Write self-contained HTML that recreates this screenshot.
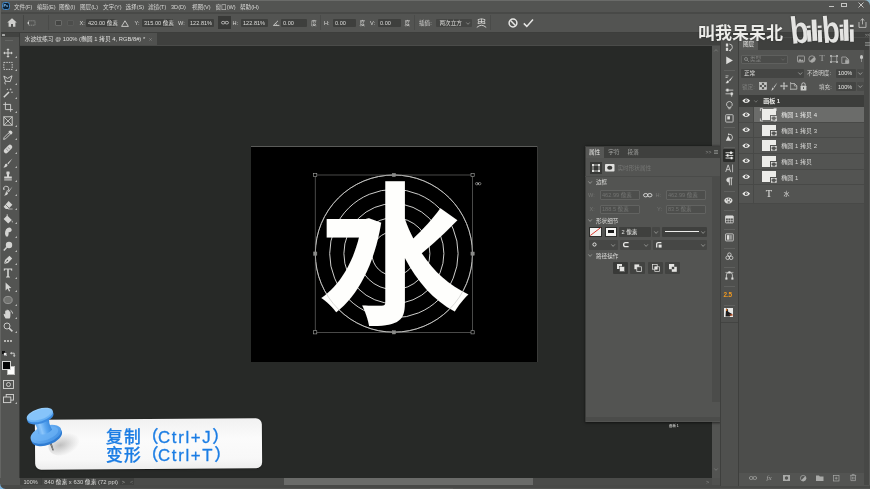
<!DOCTYPE html>
<html lang="zh-CN">
<head>
<meta charset="utf-8">
<title>水波纹练习</title>
<style>
*{box-sizing:border-box;margin:0;padding:0}
html,body{width:870px;height:489px;overflow:hidden;background:#272927}
body{position:relative;will-change:transform;font-family:"Liberation Sans","Noto Sans CJK SC",sans-serif;font-size:5.6px;color:#d6d6d4;line-height:1}
div,span,svg{position:absolute}
.t{white-space:nowrap;line-height:8px;height:8px;font-size:5.6px}
.dim{color:#7d7e7c}
svg{overflow:visible}
</style>
</head>
<body>
<div style="left:0px;top:0px;width:870px;height:1px;background:#6a6b69;"></div>
<div style="left:0px;top:1px;width:870px;height:11px;background:#535452;"></div>
<div style="left:0px;top:12px;width:870px;height:2px;background:#484947;"></div>
<div style="left:0px;top:14px;width:870px;height:18px;background:#535452;"></div>
<div style="left:0px;top:31.5px;width:870px;height:1.5px;background:#3d3e3c;"></div>
<div style="left:0px;top:33px;width:722px;height:12px;background:#3f403e;"></div>
<div style="left:19px;top:44.5px;width:703px;height:1px;background:#4a4b49;"></div>
<div style="left:2px;top:2px;width:8px;height:8.4px;background:#0b2238;border-radius:2.6px;border:0.7px solid #3f86c6"></div>
<span class="t" style="left:3.5px;top:2.4px;font-size:3.8px;color:#8cc4f4;font-weight:bold">Ps</span>
<span class="t" style="left:14px;top:3px;">文件(F)</span>
<span class="t" style="left:37px;top:3px;">编辑(E)</span>
<span class="t" style="left:59px;top:3px;">图像(I)</span>
<span class="t" style="left:80px;top:3px;">图层(L)</span>
<span class="t" style="left:103px;top:3px;">文字(Y)</span>
<span class="t" style="left:125.5px;top:3px;">选择(S)</span>
<span class="t" style="left:148px;top:3px;">滤镜(T)</span>
<span class="t" style="left:171px;top:3px;">3D(D)</span>
<span class="t" style="left:192px;top:3px;">视图(V)</span>
<span class="t" style="left:215.5px;top:3px;">窗口(W)</span>
<span class="t" style="left:240px;top:3px;">帮助(H)</span>
<div style="left:829px;top:6.3px;width:5px;height:1.2px;background:#c4c4c2;"></div>
<div style="left:841px;top:2.6px;width:6px;height:4.8px;background:transparent;border:1px solid #c4c4c2"></div>
<svg style="left:857.6px;top:2.2px" width="6" height="6" viewBox="0 0 6 6"><path d="M0.5 0.5L5.5 5.5M5.5 0.5L0.5 5.5" stroke="#c4c4c2" stroke-width="1"/></svg>
<svg style="left:7px;top:18px" width="10" height="9" viewBox="0 0 10 9"><path d="M5 0.3L0.2 4.6H1.6V8.8H4V6H6V8.8H8.4V4.6H9.8Z" fill="#cfcfcd"/></svg>
<div style="left:22.5px;top:15px;width:0.6px;height:15px;background:#454644;"></div>
<svg style="left:27px;top:19.5px" width="9" height="6" viewBox="0 0 9 6"><rect x="1.5" y="0.8" width="6.5" height="4.4" fill="none" stroke="#a9aaa8" stroke-width="0.7" stroke-dasharray="1.2 0.8"/><path d="M0 3L2 1.6V4.4Z" fill="#cfcfcd"/></svg>
<div style="left:48px;top:15px;width:0.6px;height:15px;background:#4a4b49;"></div>
<div style="left:54.6px;top:19.6px;width:7px;height:6.8px;background:#444543;border:0.6px solid #6a6b69;border-radius:1px"></div>
<div style="left:67.4px;top:19.6px;width:6.8px;height:6.8px;background:#4c4d4b;border:0.6px solid #5a5b59;border-radius:1px"></div>
<span class="t" style="left:79.6px;top:19px;">X:</span>
<div style="left:86px;top:19px;width:30px;height:8px;background:#3e3f3d;border-radius:1px"></div>
<span class="t" style="left:88px;top:19px;color:#dcdcda">420.00 像素</span>
<svg style="left:121px;top:19.5px" width="8" height="7" viewBox="0 0 8 7"><path d="M4 0.8L7.4 6.4H0.6Z" fill="none" stroke="#d0d0ce" stroke-width="0.9"/></svg>
<span class="t" style="left:134.5px;top:19px;">Y:</span>
<div style="left:142px;top:19px;width:31px;height:8px;background:#3e3f3d;border-radius:1px"></div>
<span class="t" style="left:144px;top:19px;color:#dcdcda">315.00 像素</span>
<span class="t" style="left:178px;top:19px;">W:</span>
<div style="left:188px;top:19px;width:26px;height:8px;background:#3e3f3d;border-radius:1px"></div>
<span class="t" style="left:190px;top:19px;color:#dcdcda">122.81%</span>
<div style="left:218px;top:15.5px;width:12.5px;height:13.5px;background:#383937;"></div>
<svg style="left:220.5px;top:21px" width="8" height="3.4" viewBox="0 0 8 3.4"><ellipse cx="2.2" cy="1.7" rx="1.8" ry="1.3" fill="none" stroke="#d8d8d6" stroke-width="0.7"/><ellipse cx="5.8" cy="1.7" rx="1.8" ry="1.3" fill="none" stroke="#d8d8d6" stroke-width="0.7"/></svg>
<span class="t" style="left:232.5px;top:19px;">H:</span>
<div style="left:241px;top:19px;width:27px;height:8px;background:#3e3f3d;border-radius:1px"></div>
<span class="t" style="left:243px;top:19px;color:#dcdcda">122.81%</span>
<svg style="left:273px;top:20px" width="7" height="6" viewBox="0 0 7 6"><path d="M0.4 5.4H6.4M0.4 5.4L5 0.8" fill="none" stroke="#d0d0ce" stroke-width="0.9"/><path d="M3.4 5.4A3 3 0 0 0 2.6 3.2" fill="none" stroke="#d0d0ce" stroke-width="0.7"/></svg>
<div style="left:281px;top:19px;width:26px;height:8px;background:#3e3f3d;border-radius:1px"></div>
<span class="t" style="left:283px;top:19px;color:#dcdcda">0.00</span>
<span class="t" style="left:311px;top:19px;">度</span>
<div style="left:320px;top:15px;width:0.6px;height:15px;background:#4a4b49;"></div>
<span class="t" style="left:324px;top:19px;">H:</span>
<div style="left:333px;top:19px;width:23px;height:8px;background:#3e3f3d;border-radius:1px"></div>
<span class="t" style="left:335px;top:19px;color:#dcdcda">0.00</span>
<span class="t" style="left:359.5px;top:19px;">度</span>
<span class="t" style="left:370px;top:19px;">V:</span>
<div style="left:378px;top:19px;width:23px;height:8px;background:#3e3f3d;border-radius:1px"></div>
<span class="t" style="left:380px;top:19px;color:#dcdcda">0.00</span>
<span class="t" style="left:404.5px;top:19px;">度</span>
<div style="left:414px;top:15px;width:0.6px;height:15px;background:#4a4b49;"></div>
<span class="t" style="left:419px;top:19px;">插值:</span>
<div style="left:436px;top:18.5px;width:35.5px;height:8.5px;background:#444543;border-radius:1px"></div>
<span class="t" style="left:439.5px;top:19px;">两次立方</span>
<svg style="left:466px;top:21.5px" width="4" height="3" viewBox="0 0 4 3"><path d="M0.3 0.5L2 2.3L3.7 0.5" fill="none" stroke="#b0b0ae" stroke-width="0.6"/></svg>
<svg style="left:476px;top:18px" width="11" height="10" viewBox="0 0 11 10"><path d="M2 1.6Q5.5 0 9 1.6M2 1.6Q3 3.6 2 5.6M9 1.6Q8 3.6 9 5.6M2 5.6Q5.5 4.4 9 5.6M5.5 0.8V5M2.4 3.6H8.6" fill="none" stroke="#d8d8d6" stroke-width="0.8"/><path d="M0.8 9.4Q5.5 5.2 10.2 9.4" fill="none" stroke="#d8d8d6" stroke-width="0.9"/></svg>
<div style="left:490px;top:15px;width:0.6px;height:15px;background:#4a4b49;"></div>
<svg style="left:508px;top:18px" width="10" height="10" viewBox="0 0 10 10"><circle cx="5" cy="5" r="3.9" fill="none" stroke="#e6e6e4" stroke-width="1.5"/><path d="M2.3 2.3L7.7 7.7" stroke="#e6e6e4" stroke-width="1.5"/></svg>
<svg style="left:523px;top:18px" width="11" height="10" viewBox="0 0 11 10"><path d="M0.8 5.4L3.8 8.4L10 1.4" fill="none" stroke="#e6e6e4" stroke-width="1.5"/></svg>
<svg style="left:858.3px;top:17.6px" width="9.4" height="10" viewBox="0 0 9.4 10"><path d="M1 4V9.4H8V4M4.5 6.4V0.8M2.6 2.6L4.5 0.8L6.4 2.6" fill="none" stroke="#c9c9c7" stroke-width="0.8"/></svg>
<div style="left:0px;top:32.8px;width:19.4px;height:4.5px;background:#424341;"></div>
<div style="left:1.6px;top:34.2px;width:3px;height:1.4px;background:#a9aaa8;border-radius:0.5px"></div>
<div style="left:20.2px;top:33px;width:136.5px;height:12px;background:#50514f;"></div>
<span class="t" style="left:24.6px;top:35.2px;color:#dededc;font-size:5.8px">水波纹练习 @ 100% (椭圆 1 拷贝 4, RGB/8#) *</span>
<svg style="left:148.5px;top:37.6px" width="3" height="3" viewBox="0 0 3 3"><path d="M0.3 0.3L2.7 2.7M2.7 0.3L0.3 2.7" stroke="#9a9b99" stroke-width="0.5"/></svg>
<div style="left:0px;top:37.2px;width:19.2px;height:441px;background:#535452;"></div>
<div style="left:5px;top:39.8px;width:8px;height:0.7px;background:#646563;"></div>
<div style="left:19.2px;top:32.8px;width:1px;height:445.5px;background:#3a3b39;"></div>
<div style="left:0px;top:0px;width:0.8px;height:489px;background:#646563;"></div>
<svg style="left:3.3px;top:47.5px" width="10" height="10" viewBox="0 0 10 10"><path d="M5 0.2L6.6 2H5.5V4.5H8V3.4L9.8 5L8 6.6V5.5H5.5V8H6.6L5 9.8L3.4 8H4.5V5.5H2V6.6L0.2 5L2 3.4V4.5H4.5V2H3.4Z" fill="#d4d4d2"/></svg>
<svg style="left:14.6px;top:56.1px" width="2" height="2" viewBox="0 0 2 2"><path d="M2 0V2H0Z" fill="#b9b9b7"/></svg>
<svg style="left:3.3px;top:60.8px" width="10" height="10" viewBox="0 0 10 10"><rect x="0.8" y="1.4" width="8.4" height="7" fill="none" stroke="#d4d4d2" stroke-width="0.9" stroke-dasharray="1.5 1"/></svg>
<svg style="left:14.6px;top:69.39999999999999px" width="2" height="2" viewBox="0 0 2 2"><path d="M2 0V2H0Z" fill="#b9b9b7"/></svg>
<svg style="left:3.3px;top:74.5px" width="10" height="10" viewBox="0 0 10 10"><path d="M0.8 1L4.6 3.4L9 0.8L7.2 6.6L2.6 6.2Z" fill="none" stroke="#d4d4d2" stroke-width="0.9"/><path d="M2.6 6.2Q1 7.5 2.4 9.4" fill="none" stroke="#d4d4d2" stroke-width="0.9"/></svg>
<svg style="left:14.6px;top:83.1px" width="2" height="2" viewBox="0 0 2 2"><path d="M2 0V2H0Z" fill="#b9b9b7"/></svg>
<svg style="left:3.3px;top:88.3px" width="10" height="10" viewBox="0 0 10 10"><path d="M0.8 9.2L6 4" stroke="#d4d4d2" stroke-width="1.5"/><path d="M7.6 0.4V2.4M6.6 1.4H8.6M9 3.6V5M8.3 4.3H9.7M4.4 0.8V2M3.8 1.4H5" stroke="#d4d4d2" stroke-width="0.6"/></svg>
<svg style="left:14.6px;top:96.89999999999999px" width="2" height="2" viewBox="0 0 2 2"><path d="M2 0V2H0Z" fill="#b9b9b7"/></svg>
<svg style="left:3.3px;top:102px" width="10" height="10" viewBox="0 0 10 10"><path d="M2.4 0.2V7.6H9.8M0.2 2.4H7.6V9.8" fill="none" stroke="#d4d4d2" stroke-width="0.9"/></svg>
<svg style="left:14.6px;top:110.6px" width="2" height="2" viewBox="0 0 2 2"><path d="M2 0V2H0Z" fill="#b9b9b7"/></svg>
<svg style="left:3.3px;top:116px" width="10" height="10" viewBox="0 0 10 10"><rect x="0.8" y="0.8" width="8.4" height="8.4" fill="none" stroke="#d4d4d2" stroke-width="0.9"/><path d="M0.8 0.8L9.2 9.2M9.2 0.8L0.8 9.2" stroke="#d4d4d2" stroke-width="0.8"/></svg>
<svg style="left:14.6px;top:124.6px" width="2" height="2" viewBox="0 0 2 2"><path d="M2 0V2H0Z" fill="#b9b9b7"/></svg>
<svg style="left:3.3px;top:129.8px" width="10" height="10" viewBox="0 0 10 10"><path d="M0.6 9.4L1.2 7.4L5.4 3.2L6.8 4.6L2.6 8.8Z" fill="none" stroke="#d4d4d2" stroke-width="0.9"/><path d="M5.2 2L8 4.8L9.2 3.6Q10 2 8.8 1.2Q7.6 0 6.4 0.8Z" fill="#d4d4d2"/></svg>
<svg style="left:14.6px;top:138.4px" width="2" height="2" viewBox="0 0 2 2"><path d="M2 0V2H0Z" fill="#b9b9b7"/></svg>
<svg style="left:3.3px;top:143.5px" width="10" height="10" viewBox="0 0 10 10"><g transform="rotate(-45 5 5)"><rect x="0" y="2.8" width="10" height="4.4" rx="2" fill="#d4d4d2"/><circle cx="4" cy="4.4" r="0.4" fill="#535452"/><circle cx="6" cy="4.4" r="0.4" fill="#535452"/><circle cx="4" cy="5.7" r="0.4" fill="#535452"/><circle cx="6" cy="5.7" r="0.4" fill="#535452"/></g></svg>
<svg style="left:14.6px;top:152.1px" width="2" height="2" viewBox="0 0 2 2"><path d="M2 0V2H0Z" fill="#b9b9b7"/></svg>
<svg style="left:3.3px;top:157.5px" width="10" height="10" viewBox="0 0 10 10"><path d="M9.4 0.4L4.4 5.2L5.4 6.2Z" fill="#d4d4d2"/><path d="M3.8 5.8Q5.4 7.6 3.4 8.8Q1.6 9.8 0.4 9.2Q1.8 8.4 1.8 7.2Q2 5.6 3.8 5.8Z" fill="#d4d4d2"/></svg>
<svg style="left:14.6px;top:166.1px" width="2" height="2" viewBox="0 0 2 2"><path d="M2 0V2H0Z" fill="#b9b9b7"/></svg>
<svg style="left:3.3px;top:171.2px" width="10" height="10" viewBox="0 0 10 10"><path d="M3.6 0.6H6.4Q7.2 2.4 6 4V5.6H8.8V7.6H1.2V5.6H4V4Q2.8 2.4 3.6 0.6Z" fill="#d4d4d2"/><rect x="1.2" y="8.4" width="7.6" height="1" fill="#d4d4d2"/></svg>
<svg style="left:14.6px;top:179.79999999999998px" width="2" height="2" viewBox="0 0 2 2"><path d="M2 0V2H0Z" fill="#b9b9b7"/></svg>
<svg style="left:3.3px;top:185.5px" width="10" height="10" viewBox="0 0 10 10"><path d="M9.6 0.4L5 5.4L5.8 6.2Z" fill="#d4d4d2"/><path d="M4.4 6Q5.8 7.6 4 8.8Q2.4 9.8 1 9.4Q2.4 8.4 2.4 7.4Q2.6 5.8 4.4 6Z" fill="#d4d4d2"/><path d="M0.6 3.4A2.6 2.6 0 1 1 3.2 5.4" fill="none" stroke="#d4d4d2" stroke-width="0.9"/><path d="M0 2.2L0.7 4L2.2 3Z" fill="#d4d4d2"/></svg>
<svg style="left:14.6px;top:194.1px" width="2" height="2" viewBox="0 0 2 2"><path d="M2 0V2H0Z" fill="#b9b9b7"/></svg>
<svg style="left:3.3px;top:199.5px" width="10" height="10" viewBox="0 0 10 10"><path d="M5.6 1L9.4 4.8L5.2 9H2.8L0.6 6.8Z" fill="#d4d4d2"/><path d="M2.4 4.4L6.2 8.2" stroke="#535452" stroke-width="0.7"/><path d="M5 9H9.6" stroke="#d4d4d2" stroke-width="0.7"/></svg>
<svg style="left:14.6px;top:208.1px" width="2" height="2" viewBox="0 0 2 2"><path d="M2 0V2H0Z" fill="#b9b9b7"/></svg>
<svg style="left:3.3px;top:213.5px" width="10" height="10" viewBox="0 0 10 10"><path d="M4.2 1.4L8.8 6L5.2 9.6L0.6 5Z" fill="#d4d4d2"/><path d="M4.2 0.2V4.6" stroke="#d4d4d2" stroke-width="0.8"/><path d="M9.2 6.6Q10.2 8.2 9.2 8.8Q8.2 8.2 9.2 6.6Z" fill="#d4d4d2"/></svg>
<svg style="left:14.6px;top:222.1px" width="2" height="2" viewBox="0 0 2 2"><path d="M2 0V2H0Z" fill="#b9b9b7"/></svg>
<svg style="left:3.3px;top:227.2px" width="10" height="10" viewBox="0 0 10 10"><path d="M3 9.6Q1.4 7 2.2 4.4Q2.8 2 4.6 1Q6.8 0 8.2 1.4Q9.4 2.8 8.2 4.2Q7 5.4 5.6 5.2Q6 7.4 5 9.6Z" fill="#d4d4d2"/></svg>
<svg style="left:14.6px;top:235.79999999999998px" width="2" height="2" viewBox="0 0 2 2"><path d="M2 0V2H0Z" fill="#b9b9b7"/></svg>
<svg style="left:3.3px;top:241px" width="10" height="10" viewBox="0 0 10 10"><circle cx="6" cy="4" r="3.2" fill="#d4d4d2"/><path d="M3.8 6.2L0.8 9.4" stroke="#d4d4d2" stroke-width="1.5"/></svg>
<svg style="left:14.6px;top:249.6px" width="2" height="2" viewBox="0 0 2 2"><path d="M2 0V2H0Z" fill="#b9b9b7"/></svg>
<svg style="left:3.3px;top:254.5px" width="10" height="10" viewBox="0 0 10 10"><path d="M1 9L2 5L6.4 0.8L9.2 3.6L5 8Z" fill="#d4d4d2"/><circle cx="4.4" cy="5.6" r="0.8" fill="#535452"/><path d="M1 9L4.2 5.8" stroke="#535452" stroke-width="0.5"/></svg>
<svg style="left:14.6px;top:263.1px" width="2" height="2" viewBox="0 0 2 2"><path d="M2 0V2H0Z" fill="#b9b9b7"/></svg>
<svg style="left:3.3px;top:268px" width="10" height="10" viewBox="0 0 10 10"><path d="M0.8 0.6H9.2V2.8H8.4Q8.2 1.6 7.2 1.6H5.8V8Q5.8 8.6 7 8.7V9.4H3V8.7Q4.2 8.6 4.2 8V1.6H2.8Q1.8 1.6 1.6 2.8H0.8Z" fill="#d4d4d2"/></svg>
<svg style="left:14.6px;top:276.6px" width="2" height="2" viewBox="0 0 2 2"><path d="M2 0V2H0Z" fill="#b9b9b7"/></svg>
<svg style="left:3.3px;top:281.8px" width="10" height="10" viewBox="0 0 10 10"><path d="M2.6 0.4V8.4L4.6 6.6L6 9.6L7.2 9L5.8 6.2L8.4 6Z" fill="#d4d4d2"/></svg>
<svg style="left:14.6px;top:290.40000000000003px" width="2" height="2" viewBox="0 0 2 2"><path d="M2 0V2H0Z" fill="#b9b9b7"/></svg>
<svg style="left:3.3px;top:295.3px" width="10" height="10" viewBox="0 0 10 10"><ellipse cx="5" cy="5" rx="4.2" ry="3.6" fill="#71726f" stroke="#a4a5a3" stroke-width="0.8"/></svg>
<svg style="left:14.6px;top:303.90000000000003px" width="2" height="2" viewBox="0 0 2 2"><path d="M2 0V2H0Z" fill="#b9b9b7"/></svg>
<svg style="left:3.3px;top:308.8px" width="10" height="10" viewBox="0 0 10 10"><path d="M2.6 9.6Q0.6 6.6 0.6 5Q1.2 4.2 2.2 5.4V2Q2.8 1.2 3.4 2V1Q4.2 0.2 4.8 1V1.4Q5.6 0.6 6.2 1.6V2.4Q7 1.8 7.4 2.8V6.6Q7.4 8.4 6.6 9.6Z" fill="#d4d4d2"/><path d="M7.6 1.4A3.6 3.6 0 0 1 9.6 4.6" fill="none" stroke="#d4d4d2" stroke-width="0.9"/></svg>
<svg style="left:14.6px;top:317.40000000000003px" width="2" height="2" viewBox="0 0 2 2"><path d="M2 0V2H0Z" fill="#b9b9b7"/></svg>
<svg style="left:3.3px;top:322.3px" width="10" height="10" viewBox="0 0 10 10"><circle cx="4" cy="4" r="3" fill="none" stroke="#d4d4d2" stroke-width="0.9"/><path d="M6.2 6.2L9.4 9.4" stroke="#d4d4d2" stroke-width="1.5"/></svg>
<svg style="left:14.6px;top:330.90000000000003px" width="2" height="2" viewBox="0 0 2 2"><path d="M2 0V2H0Z" fill="#b9b9b7"/></svg>
<div style="left:3.6px;top:340.4px;width:2px;height:2px;background:#d4d4d2;border-radius:1px"></div>
<div style="left:7.0px;top:340.4px;width:2px;height:2px;background:#d4d4d2;border-radius:1px"></div>
<div style="left:10.4px;top:340.4px;width:2px;height:2px;background:#d4d4d2;border-radius:1px"></div>
<svg style="left:2px;top:351px" width="5" height="5" viewBox="0 0 5 5"><rect x="0" y="0" width="3" height="3" fill="#111"/><rect x="1.8" y="1.8" width="3" height="3" fill="#eee" stroke="#111" stroke-width="0.3"/></svg>
<svg style="left:10px;top:350.5px" width="6" height="6" viewBox="0 0 6 6"><path d="M1 2.2H4.2V5" fill="none" stroke="#d4d4d2" stroke-width="0.9"/><path d="M0 2.2L1.6 0.8V3.6Z" fill="#d4d4d2"/><path d="M4.2 6L2.8 4.4H5.6Z" fill="#d4d4d2"/></svg>
<div style="left:6.5px;top:365.5px;width:8.5px;height:9.5px;background:#fdfdfd;border:0.6px solid #bdbdbb"></div>
<div style="left:2px;top:360.5px;width:8.5px;height:9px;background:#050505;border:0.7px solid #d5d5d3"></div>
<svg style="left:3px;top:380px" width="11" height="9" viewBox="0 0 11 9"><rect x="0.5" y="0.5" width="10" height="8" fill="none" stroke="#d4d4d2" stroke-width="0.9"/><circle cx="5.5" cy="4.5" r="2" fill="none" stroke="#d4d4d2" stroke-width="0.9"/></svg>
<svg style="left:3px;top:393.5px" width="11" height="9" viewBox="0 0 11 9"><rect x="3.2" y="0.5" width="7.3" height="5.6" fill="none" stroke="#d4d4d2" stroke-width="0.9"/><rect x="0.5" y="3" width="7.3" height="5.6" fill="#535452" stroke="#d4d4d2" stroke-width="0.9"/></svg>
<svg style="left:14.6px;top:401.6px" width="2" height="2" viewBox="0 0 2 2"><path d="M2 0V2H0Z" fill="#b9b9b7"/></svg>
<div style="left:251px;top:146px;width:286.5px;height:215.5px;background:#000000;"></div>
<div style="left:251px;top:146px;width:286.5px;height:1px;background:#5a5b59;"></div>
<div style="left:536.5px;top:146px;width:1px;height:215.5px;background:#3a3b39;"></div>
<svg style="left:0;top:0" width="870" height="489" viewBox="0 0 870 489"><circle cx="393.9" cy="253.6" r="22" fill="none" stroke="#e4e4e2" stroke-width="0.9"/><circle cx="393.9" cy="253.6" r="36" fill="none" stroke="#e4e4e2" stroke-width="0.9"/><circle cx="393.9" cy="253.6" r="50" fill="none" stroke="#e4e4e2" stroke-width="0.9"/><circle cx="393.9" cy="253.6" r="64.2" fill="none" stroke="#e4e4e2" stroke-width="0.9"/><circle cx="393.9" cy="253.6" r="78.6" fill="none" stroke="#e4e4e2" stroke-width="0.9"/></svg>
<span id="shui" style="left:318px;top:129.3px;font-family:'Noto Sans CJK SC',sans-serif;font-weight:700;font-size:153px;line-height:234px;height:234px;color:#fefefc;white-space:nowrap">水</span>
<svg style="left:0;top:0" width="870" height="489" viewBox="0 0 870 489"><circle cx="393.9" cy="253.6" r="78.6" fill="none" stroke="#b4b5b3" stroke-width="0.5"/><rect x="315.2" y="175" width="157.40000000000003" height="157.3" fill="none" stroke="#7a7b79" stroke-width="0.6"/><rect x="313.59999999999997" y="173.4" width="3.2" height="3.2" fill="#000" stroke="#a6a7a5" stroke-width="0.6"/><rect x="313.5" y="251.95000000000002" width="3.4" height="3.4" fill="#8a8b89" stroke="#8a8b89" stroke-width="0.4"/><rect x="313.59999999999997" y="330.7" width="3.2" height="3.2" fill="#000" stroke="#a6a7a5" stroke-width="0.6"/><rect x="392.2" y="173.3" width="3.4" height="3.4" fill="#8a8b89" stroke="#8a8b89" stroke-width="0.4"/><rect x="392.2" y="330.6" width="3.4" height="3.4" fill="#8a8b89" stroke="#8a8b89" stroke-width="0.4"/><rect x="471.0" y="173.4" width="3.2" height="3.2" fill="#000" stroke="#a6a7a5" stroke-width="0.6"/><rect x="470.90000000000003" y="251.95000000000002" width="3.4" height="3.4" fill="#8a8b89" stroke="#8a8b89" stroke-width="0.4"/><rect x="471.0" y="330.7" width="3.2" height="3.2" fill="#000" stroke="#a6a7a5" stroke-width="0.6"/></svg>
<svg style="left:474.6px;top:181.6px" width="6.4" height="3.4" viewBox="0 0 6.4 3.4"><ellipse cx="1.8" cy="1.7" rx="1.4" ry="1.2" fill="none" stroke="#b4b4b2" stroke-width="0.6"/><ellipse cx="4.6" cy="1.7" rx="1.4" ry="1.2" fill="none" stroke="#b4b4b2" stroke-width="0.6"/><path d="M2.4 1.7H4" stroke="#e0e0de" stroke-width="0.7"/></svg>
<span class="t" style="left:669px;top:421.5px;font-size:3.4px;color:#f0f0ee">画板 1</span>
<div style="left:711.5px;top:45.5px;width:8.5px;height:432.5px;background:#535452;"></div>
<svg style="left:714px;top:49px" width="4" height="3" viewBox="0 0 4 3"><path d="M0.3 2.4L2 0.6L3.7 2.4" fill="none" stroke="#8a8b89" stroke-width="0.6"/></svg>
<svg style="left:714px;top:468px" width="4" height="3" viewBox="0 0 4 3"><path d="M0.3 0.5L2 2.3L3.7 0.5" fill="none" stroke="#8a8b89" stroke-width="0.6"/></svg>
<div style="left:0px;top:478px;width:722px;height:7.5px;background:#3f403e;"></div>
<div style="left:0px;top:485px;width:870px;height:4px;background:#484947;"></div>
<div style="left:22px;top:488.2px;width:848px;height:0.8px;background:#525351;"></div>
<div style="left:430px;top:487.8px;width:23px;height:1.2px;background:#5c5d5b;"></div>
<div style="left:0px;top:478px;width:19.5px;height:7.2px;background:#535452;"></div>
<svg style="left:0;top:483px" width="6" height="6" viewBox="0 0 6 6"><path d="M0 0.5Q0.6 5.4 5.5 6H0Z" fill="#7db4de"/></svg>
<svg style="left:864px;top:0" width="6" height="6" viewBox="0 0 6 6"><path d="M0.5 0Q5.4 0.6 6 5.5V0Z" fill="#8fb6c8"/></svg>
<div style="left:20px;top:478.4px;width:21px;height:6.8px;background:#424341;"></div>
<span class="t" style="left:23.5px;top:478.4px;">100%</span>
<div style="left:42px;top:478.4px;width:78px;height:6.8px;background:#464745;"></div>
<span class="t" style="left:44.2px;top:478.4px;font-size:5.85px">840 像素 x 630 像素 (72 ppi)</span>
<span class="t" style="left:121.8px;top:478.4px;color:#a0a09e">&gt;</span>
<span class="t" style="left:130px;top:478.4px;color:#7a7b79">&lt;</span>
<div style="left:134px;top:478.2px;width:566px;height:7px;background:#4a4b49;"></div>
<div style="left:284px;top:478.2px;width:249px;height:6.6px;background:#6a6b69;"></div>
<div style="left:700px;top:478.2px;width:11.5px;height:7px;background:#4a4b49;"></div>
<span class="t" style="left:706px;top:478.4px;color:#8a8b89">&gt;</span>
<div style="left:711.5px;top:478px;width:8.5px;height:7.2px;background:#50514f;"></div>
<div style="left:584.5px;top:146px;width:135.5px;height:275.5px;background:#535452;box-shadow:0 0 2.5px 0.5px rgba(0,0,0,0.55)"></div>
<div style="left:584.5px;top:146px;width:135.5px;height:12.2px;background:#3f403e;"></div>
<div style="left:584.5px;top:146px;width:19.5px;height:12.2px;background:#565755;"></div>
<div style="left:584.5px;top:416.5px;width:135.5px;height:4.5px;background:#4b4c4a;"></div>
<div style="left:584.5px;top:146px;width:0.7px;height:275.5px;background:#3c3d3b;"></div>
<div style="left:584.5px;top:146px;width:135.5px;height:0.7px;background:#3c3d3b;"></div>
<div style="left:585.2px;top:176.3px;width:126.8px;height:0.7px;background:#4a4b49;"></div>
<div style="left:712px;top:176px;width:7.5px;height:226px;background:#4b4c4a;"></div>
<span class="t" style="left:589px;top:148.4px;color:#e6e6e4">属性</span>
<span class="t" style="left:608.3px;top:148.4px;color:#a3a4a2">字符</span>
<span class="t" style="left:627.6px;top:148.4px;color:#a3a4a2">段落</span>
<span class="t" style="left:705.5px;top:147.6px;color:#8e8f8d;font-size:5px">&gt;&gt;</span>
<svg style="left:714px;top:150px" width="4" height="4" viewBox="0 0 4 4"><path d="M0 0.5H4M0 2H4M0 3.5H4" stroke="#a3a4a2" stroke-width="0.6"/></svg>
<div style="left:590px;top:161.5px;width:12px;height:12.5px;background:#383937;"></div>
<svg style="left:592px;top:163.5px" width="8" height="8" viewBox="0 0 8 8"><rect x="1" y="1" width="6" height="6" fill="none" stroke="#e0e0de" stroke-width="0.8"/><rect x="0" y="0" width="2" height="2" fill="#e0e0de"/><rect x="6" y="0" width="2" height="2" fill="#e0e0de"/><rect x="0" y="6" width="2" height="2" fill="#e0e0de"/><rect x="6" y="6" width="2" height="2" fill="#e0e0de"/></svg>
<svg style="left:604.5px;top:164px" width="9.5" height="7.5" viewBox="0 0 9.5 7.5"><rect x="0" y="0" width="9.5" height="7.5" rx="0.8" fill="#e0e0de"/><ellipse cx="4.75" cy="3.75" rx="2.6" ry="2.1" fill="#3a3b39"/></svg>
<span class="t" style="left:617.5px;top:163.8px;color:#757674">实时形状属性</span>
<svg style="left:588.4px;top:180.7px" width="4.2" height="3" viewBox="0 0 4.2 3"><path d="M0.3 0.4L2.1 2.4L3.9 0.4" fill="none" stroke="#b3b4b2" stroke-width="0.65"/></svg>
<span class="t" style="left:596px;top:178.4px;color:#d8d8d6">边框</span>
<span class="t" style="left:588px;top:190.8px;color:#757674">W:</span>
<div style="left:600px;top:190px;width:39.5px;height:9.5px;background:#4d4e4c;border:0.6px solid #626361;border-radius:1px"></div>
<span class="t" style="left:602px;top:190.6px;color:#727371">462.99 像素</span>
<svg style="left:642.5px;top:192.6px" width="9.5" height="4.4" viewBox="0 0 9.5 4.4"><ellipse cx="2.7" cy="2.2" rx="2.2" ry="1.7" fill="none" stroke="#dededc" stroke-width="0.9"/><ellipse cx="6.8" cy="2.2" rx="2.2" ry="1.7" fill="none" stroke="#dededc" stroke-width="0.9"/></svg>
<span class="t" style="left:655.5px;top:190.8px;color:#757674">H:</span>
<div style="left:666px;top:190px;width:40px;height:9.5px;background:#4d4e4c;border:0.6px solid #626361;border-radius:1px"></div>
<span class="t" style="left:668px;top:190.6px;color:#727371">462.99 像素</span>
<span class="t" style="left:589.5px;top:205.3px;color:#757674">X:</span>
<div style="left:600px;top:204.5px;width:39.5px;height:9.5px;background:#4d4e4c;border:0.6px solid #626361;border-radius:1px"></div>
<span class="t" style="left:602px;top:205.1px;color:#727371">188.5 像素</span>
<span class="t" style="left:657px;top:205.3px;color:#757674">Y:</span>
<div style="left:666px;top:204.5px;width:40px;height:9.5px;background:#4d4e4c;border:0.6px solid #626361;border-radius:1px"></div>
<span class="t" style="left:668px;top:205.1px;color:#727371">83.5 像素</span>
<svg style="left:588.4px;top:219.2px" width="4.2" height="3" viewBox="0 0 4.2 3"><path d="M0.3 0.4L2.1 2.4L3.9 0.4" fill="none" stroke="#b3b4b2" stroke-width="0.65"/></svg>
<span class="t" style="left:596px;top:216.8px;color:#d8d8d6">形状细节</span>
<div style="left:589px;top:227px;width:12.5px;height:9.5px;background:#f4f4f2;border:0.6px solid #2e2f2d"></div>
<svg style="left:589px;top:227px" width="12.5" height="9.5" viewBox="0 0 12.5 9.5"><path d="M1.2 8.6L11.3 0.9" stroke="#d8261c" stroke-width="0.9"/></svg>
<div style="left:605px;top:227px;width:12px;height:9.5px;background:#f4f4f2;border:0.6px solid #2e2f2d"></div>
<div style="left:607.6px;top:230.4px;width:6.8px;height:2.6px;background:#1a1a1a;"></div>
<div style="left:619px;top:227px;width:32px;height:9.5px;background:#3f403e;border-radius:1px"></div>
<span class="t" style="left:621.5px;top:227.7px;color:#e2e2e0">2 像素</span>
<div style="left:651.6px;top:227px;width:8px;height:9.5px;background:#464745;border-radius:1px"></div>
<svg style="left:653.6px;top:230.6px" width="4.2" height="3" viewBox="0 0 4.2 3"><path d="M0.3 0.4L2.1 2.4L3.9 0.4" fill="none" stroke="#b3b4b2" stroke-width="0.65"/></svg>
<div style="left:662px;top:227px;width:44.5px;height:9.5px;background:#3f403e;border-radius:1px"></div>
<div style="left:664.5px;top:231.2px;width:34.5px;height:1.3px;background:#ededeb;"></div>
<svg style="left:700.9px;top:230.6px" width="4.2" height="3" viewBox="0 0 4.2 3"><path d="M0.3 0.4L2.1 2.4L3.9 0.4" fill="none" stroke="#b3b4b2" stroke-width="0.65"/></svg>
<div style="left:589px;top:240px;width:28.5px;height:9.5px;background:#464745;border-radius:1px"></div>
<svg style="left:592px;top:242.4px" width="5" height="5" viewBox="0 0 5 5"><circle cx="2.5" cy="2.5" r="1.6" fill="none" stroke="#e6e6e4" stroke-width="1"/></svg>
<svg style="left:610.9px;top:243.6px" width="4.2" height="3" viewBox="0 0 4.2 3"><path d="M0.3 0.4L2.1 2.4L3.9 0.4" fill="none" stroke="#b3b4b2" stroke-width="0.65"/></svg>
<div style="left:620px;top:240px;width:30.5px;height:9.5px;background:#464745;border-radius:1px"></div>
<svg style="left:623px;top:242.2px" width="6" height="5.4" viewBox="0 0 6 5.4"><path d="M5.6 0.7H2.6A2 2 0 0 0 2.6 4.7H5.6" fill="none" stroke="#e6e6e4" stroke-width="1.3"/></svg>
<svg style="left:644.4px;top:243.6px" width="4.2" height="3" viewBox="0 0 4.2 3"><path d="M0.3 0.4L2.1 2.4L3.9 0.4" fill="none" stroke="#b3b4b2" stroke-width="0.65"/></svg>
<div style="left:653px;top:240px;width:53.5px;height:9.5px;background:#464745;border-radius:1px"></div>
<svg style="left:656px;top:242px" width="6" height="6" viewBox="0 0 6 6"><path d="M0.7 5.6V2.2Q0.7 0.7 2.2 0.7H5.4" fill="none" stroke="#e6e6e4" stroke-width="1.3"/><rect x="2.6" y="2.6" width="3" height="3" fill="#e6e6e4"/></svg>
<svg style="left:700.9px;top:243.6px" width="4.2" height="3" viewBox="0 0 4.2 3"><path d="M0.3 0.4L2.1 2.4L3.9 0.4" fill="none" stroke="#b3b4b2" stroke-width="0.65"/></svg>
<svg style="left:588.4px;top:254.2px" width="4.2" height="3" viewBox="0 0 4.2 3"><path d="M0.3 0.4L2.1 2.4L3.9 0.4" fill="none" stroke="#b3b4b2" stroke-width="0.65"/></svg>
<span class="t" style="left:596px;top:251.8px;color:#d8d8d6">路径操作</span>
<div style="left:612.5px;top:262px;width:15px;height:11.5px;background:#393a38;border-radius:1px"></div>
<div style="left:630px;top:262px;width:15px;height:11.5px;background:#424341;border-radius:1px"></div>
<div style="left:647.5px;top:262px;width:15px;height:11.5px;background:#424341;border-radius:1px"></div>
<div style="left:665px;top:262px;width:15px;height:11.5px;background:#424341;border-radius:1px"></div>
<svg style="left:616.5px;top:264px" width="8" height="8" viewBox="0 0 8 8"><rect x="0" y="0" width="5" height="5" fill="#e4e4e2"/><rect x="2.6" y="2.6" width="5" height="5" fill="#e4e4e2" stroke="#393a38" stroke-width="0.5"/></svg>
<svg style="left:634px;top:264px" width="8" height="8" viewBox="0 0 8 8"><rect x="0.4" y="0.4" width="4.8" height="4.8" fill="#e4e4e2"/><rect x="2.8" y="2.8" width="4.6" height="4.6" fill="#424341" stroke="#e4e4e2" stroke-width="0.7"/></svg>
<svg style="left:651.5px;top:264px" width="8" height="8" viewBox="0 0 8 8"><rect x="0.4" y="0.4" width="4.8" height="4.8" fill="none" stroke="#e4e4e2" stroke-width="0.7"/><rect x="2.8" y="2.8" width="4.6" height="4.6" fill="none" stroke="#e4e4e2" stroke-width="0.7"/><rect x="2.8" y="2.8" width="2.4" height="2.4" fill="#e4e4e2"/></svg>
<svg style="left:669px;top:264px" width="8" height="8" viewBox="0 0 8 8"><rect x="0" y="0" width="5.2" height="5.2" fill="#e4e4e2"/><rect x="2.8" y="2.8" width="5" height="5" fill="#e4e4e2"/><rect x="2.8" y="2.8" width="2.4" height="2.4" fill="#424341"/></svg>
<div style="left:720px;top:33px;width:18.5px;height:452.5px;background:#4f504e;"></div>
<div style="left:720px;top:33px;width:0.8px;height:452.5px;background:#3e3f3d;"></div>
<div style="left:738px;top:33px;width:0.8px;height:452.5px;background:#3e3f3d;"></div>
<div style="left:720.8px;top:33px;width:17.2px;height:7px;background:#424341;"></div>
<svg style="left:724.5px;top:43.300000000000004px" width="8.8" height="8.8" viewBox="0 0 10 10"><rect x="1" y="0.6" width="2.6" height="3.4" fill="#dcdcda"/><rect x="1" y="5.4" width="2.6" height="3.6" fill="#dcdcda"/><path d="M5 1.2Q8.6 1.4 8.4 5Q8.2 7.6 5.4 8.4" fill="none" stroke="#dcdcda" stroke-width="0.9"/><path d="M4.4 8.4L6.4 7V9.6Z" fill="#dcdcda"/></svg>
<svg style="left:724.5px;top:56.300000000000004px" width="8.8" height="8.8" viewBox="0 0 10 10"><path d="M1.4 0.6L9 5L1.4 9.4Z" fill="#dcdcda"/></svg>
<div style="left:723.5px;top:70.4px;width:11px;height:0.7px;background:#5f605e;"></div>
<svg style="left:724.5px;top:75.0px" width="8.8" height="8.8" viewBox="0 0 10 10"><path d="M9.6 0.8L4.6 6L5.6 7Z" fill="#dcdcda"/><path d="M4 6.4Q5.2 8 3.6 9Q2 9.8 0.6 9.2Q2 8.4 2 7.4Q2.2 6 4 6.4Z" fill="#dcdcda"/><path d="M0.6 1H4M0.6 2.8H3" stroke="#dcdcda" stroke-width="0.8"/></svg>
<svg style="left:724.5px;top:88.3px" width="8.8" height="8.8" viewBox="0 0 10 10"><path d="M0.6 2.4H9.4M0.6 6.6H9.4" stroke="#dcdcda" stroke-width="0.9"/><rect x="1.6" y="0.8" width="2.4" height="3.2" fill="#dcdcda"/><rect x="6.4" y="5" width="2.4" height="3.2" fill="#dcdcda"/><path d="M7.6 8.2V9.8" stroke="#dcdcda" stroke-width="1"/></svg>
<svg style="left:724.5px;top:100.69999999999999px" width="8.8" height="8.8" viewBox="0 0 10 10"><path d="M5 0.6A3.2 3.2 0 0 1 6.6 6.6V7.6H3.4V6.6A3.2 3.2 0 0 1 5 0.6Z" fill="none" stroke="#dcdcda" stroke-width="0.9"/><path d="M3.8 8.8H6.2" stroke="#dcdcda" stroke-width="0.9"/></svg>
<svg style="left:724.5px;top:113.8px" width="8.8" height="8.8" viewBox="0 0 10 10"><rect x="0.8" y="0.8" width="8.4" height="8.4" rx="0.8" fill="none" stroke="#dcdcda" stroke-width="0.9"/><rect x="2.6" y="2.6" width="3" height="3.6" fill="#dcdcda"/></svg>
<div style="left:723.5px;top:127.4px;width:11px;height:0.7px;background:#5f605e;"></div>
<svg style="left:724.5px;top:132.9px" width="8.8" height="8.8" viewBox="0 0 10 10"><path d="M1 8.8L3.6 3L7 8.8Z" fill="#dcdcda"/><path d="M4.4 1.4A3.6 3.6 0 1 1 5.4 8.6" fill="none" stroke="#dcdcda" stroke-width="0.9"/><path d="M3.4 0.4L5.2 1.4L3.6 2.8Z" fill="#dcdcda"/></svg>
<div style="left:723.5px;top:147px;width:11px;height:0.7px;background:#5f605e;"></div>
<div style="left:722.6px;top:149.2px;width:12.8px;height:12.4px;background:#2c2d2b;border-radius:1px"></div>
<svg style="left:724.5px;top:150.9px" width="8.8" height="8.8" viewBox="0 0 10 10"><path d="M0.6 2H9.4M0.6 5H9.4M0.6 8H9.4" stroke="#f0f0ee" stroke-width="1"/><rect x="5.8" y="0.6" width="2" height="2.8" fill="#f0f0ee"/><rect x="2" y="3.6" width="2" height="2.8" fill="#f0f0ee"/><rect x="6.4" y="6.6" width="2" height="2.8" fill="#f0f0ee"/></svg>
<svg style="left:724.5px;top:164.29999999999998px" width="8.8" height="8.8" viewBox="0 0 10 10"><path d="M0.8 9L3.6 1L6.4 9M1.8 6.4H5.4" fill="none" stroke="#dcdcda" stroke-width="0.9"/><path d="M8.6 0.6V9.4" stroke="#dcdcda" stroke-width="0.8"/></svg>
<svg style="left:724.5px;top:176.79999999999998px" width="8.8" height="8.8" viewBox="0 0 10 10"><path d="M8.6 1H4.4A2.4 2.4 0 0 0 4.4 5.8H5V9.4M7.2 1V9.4" fill="none" stroke="#dcdcda" stroke-width="1"/><path d="M4.4 1A2.4 2.4 0 0 0 4.4 5.8H5.4V1Z" fill="#dcdcda"/></svg>
<div style="left:723.5px;top:191.3px;width:11px;height:0.7px;background:#5f605e;"></div>
<svg style="left:724.06px;top:195.9px" width="9.68" height="8.8" viewBox="0 0 11 10"><path d="M5 1.6C8 1.6 9.6 3.2 9.6 5C9.6 7.2 7.6 8.6 5 8.6C2.4 8.6 0.4 7.2 0.4 5C0.4 3.2 2 1.6 5 1.6Z" fill="#dcdcda"/><circle cx="3" cy="4.4" r="0.8" fill="#4f504e"/><circle cx="5.2" cy="3.4" r="0.8" fill="#4f504e"/><circle cx="7.4" cy="4.6" r="0.8" fill="#4f504e"/><ellipse cx="5.4" cy="6.8" rx="1.4" ry="0.8" fill="#4f504e"/></svg>
<div style="left:723.5px;top:210px;width:11px;height:0.7px;background:#5f605e;"></div>
<svg style="left:724.5px;top:214.79999999999998px" width="8.8" height="8.8" viewBox="0 0 10 10"><rect x="0.6" y="1" width="8.8" height="8" rx="0.6" fill="none" stroke="#dcdcda" stroke-width="0.9"/><path d="M0.6 3.6H9.4M0.6 6.2H9.4M3.6 1V9M6.4 1V9" stroke="#dcdcda" stroke-width="0.6"/><rect x="0.6" y="1" width="8.8" height="2.6" fill="#dcdcda"/></svg>
<div style="left:723.5px;top:229px;width:11px;height:0.7px;background:#5f605e;"></div>
<svg style="left:724.5px;top:233.4px" width="8.8" height="8.8" viewBox="0 0 10 10"><rect x="0.6" y="1" width="8.8" height="8" rx="0.6" fill="none" stroke="#dcdcda" stroke-width="0.9"/><rect x="2.2" y="2.4" width="2.6" height="5.2" fill="#dcdcda"/><rect x="5" y="2.4" width="2.8" height="5.2" fill="#9a9b99"/></svg>
<div style="left:723.5px;top:248px;width:11px;height:0.7px;background:#5f605e;"></div>
<svg style="left:724.5px;top:252.4px" width="8.8" height="8.8" viewBox="0 0 10 10"><circle cx="5" cy="3" r="2" fill="none" stroke="#dcdcda" stroke-width="0.9"/><circle cx="3" cy="6.6" r="2" fill="none" stroke="#dcdcda" stroke-width="0.9"/><circle cx="7" cy="6.6" r="2" fill="none" stroke="#dcdcda" stroke-width="0.9"/></svg>
<div style="left:723.5px;top:267px;width:11px;height:0.7px;background:#5f605e;"></div>
<svg style="left:724.5px;top:271.40000000000003px" width="8.8" height="8.8" viewBox="0 0 10 10"><path d="M1.6 8.4V4.4Q1.6 1.6 5 1.6Q8.4 1.6 8.4 4.4V8.4" fill="none" stroke="#dcdcda" stroke-width="0.9"/><rect x="0.4" y="7.4" width="2.4" height="2.4" fill="#dcdcda"/><rect x="7.2" y="7.4" width="2.4" height="2.4" fill="#dcdcda"/><rect x="3.8" y="0.4" width="2.4" height="2.4" fill="#dcdcda"/><path d="M0.4 1.6H9.6" stroke="#dcdcda" stroke-width="0.6"/></svg>
<div style="left:723.5px;top:286px;width:11px;height:0.7px;background:#5f605e;"></div>
<span class="t" style="left:723.6px;top:291px;font-size:6.4px;font-weight:bold;color:#f29a1f;letter-spacing:-0.2px">2.5</span>
<div style="left:723.5px;top:304.6px;width:11px;height:0.7px;background:#5f605e;"></div>
<svg style="left:724.4px;top:307.5px" width="9" height="9" viewBox="0 0 9.5 9.5"><rect x="0" y="0" width="9.5" height="9.5" fill="#e8e8e6"/><path d="M2.2 0.6Q4.6 0.6 4.4 4L8.6 6.4L6 9H1.6Z" fill="#1d1d1d"/><path d="M2 0.8Q3.6 0.6 3.6 2.6L2.2 3.4Z" fill="#e0701c"/><path d="M4.6 7L9 6.4L8.8 8.4Z" fill="#b9481c"/></svg>
<div style="left:720.8px;top:322.4px;width:17.2px;height:0.7px;background:#434442;"></div>
<div style="left:738.8px;top:33px;width:131.2px;height:452.5px;background:#535452;"></div>
<div style="left:738.8px;top:33px;width:131.2px;height:5px;background:#3f403e;"></div>
<div style="left:738.8px;top:37.3px;width:131.2px;height:0.7px;background:#4b4c4a;"></div>
<div style="left:738.8px;top:38px;width:131.2px;height:12px;background:#3f403e;"></div>
<div style="left:738.8px;top:38px;width:19.2px;height:12px;background:#565755;"></div>
<div style="left:738.8px;top:203.2px;width:125.2px;height:270px;background:#4c4d4b;"></div>
<div style="left:738.8px;top:473px;width:125.2px;height:12px;background:#535452;"></div>
<div style="left:864px;top:50px;width:5px;height:435px;background:#474846;"></div>
<div style="left:869px;top:33px;width:1px;height:452px;background:#5a5b59;"></div>
<span class="t" style="left:743px;top:39.8px;color:#e6e6e4">图层</span>
<span class="t" style="left:864.8px;top:31.6px;font-size:4.6px;color:#9a9b99;letter-spacing:-0.4px">&gt;&gt;</span>
<svg style="left:865.4px;top:42px" width="5" height="4" viewBox="0 0 5 4"><path d="M0 0.5H5M0 2H5M0 3.5H5" stroke="#a3a4a2" stroke-width="0.6"/></svg>
<div style="left:741px;top:55px;width:46.5px;height:8.5px;background:#4b4c4a;border:0.5px solid #5f605e;border-radius:1px"></div>
<svg style="left:743.5px;top:56.8px" width="5" height="5" viewBox="0 0 5 5"><circle cx="2" cy="2" r="1.5" fill="none" stroke="#9a9b99" stroke-width="0.7"/><path d="M3.2 3.2L4.8 4.8" stroke="#9a9b99" stroke-width="0.8"/></svg>
<span class="t" style="left:750px;top:55.4px;color:#7e7f7d">类型</span>
<svg style="left:781px;top:58px" width="4" height="3" viewBox="0 0 4 3"><path d="M0.3 0.5L2 2.3L3.7 0.5" fill="none" stroke="#6e6f6d" stroke-width="0.6"/></svg>
<svg style="left:797px;top:55px" width="8" height="8" viewBox="0 0 8 8"><rect x="0.5" y="1" width="7" height="6" rx="0.6" fill="none" stroke="#a9aaa8" stroke-width="0.8"/><path d="M1 6.4L3 3.6L4.4 5.4L5.4 4.4L7 6.4Z" fill="#a9aaa8"/></svg>
<svg style="left:808px;top:55px" width="8" height="8" viewBox="0 0 8 8"><circle cx="4" cy="4" r="3.2" fill="none" stroke="#a9aaa8" stroke-width="0.8"/><path d="M6.3 1.7A3.2 3.2 0 0 1 1.7 6.3Z" fill="#a9aaa8"/></svg>
<span class="t" style="left:819.4px;top:54.4px;font-family:'Liberation Serif',serif;font-size:8.5px;color:#a9aaa8">T</span>
<svg style="left:830px;top:55px" width="8" height="8" viewBox="0 0 8 8"><rect x="1.2" y="1.2" width="5.6" height="5.6" fill="none" stroke="#a9aaa8" stroke-width="0.8"/><rect x="0" y="0" width="2" height="2" fill="#a9aaa8"/><rect x="6" y="0" width="2" height="2" fill="#a9aaa8"/><rect x="0" y="6" width="2" height="2" fill="#a9aaa8"/><rect x="6" y="6" width="2" height="2" fill="#a9aaa8"/></svg>
<svg style="left:841px;top:54.5px" width="9" height="9" viewBox="0 0 9 9"><path d="M0.8 2H5L7 4V8.4H0.8Z" fill="none" stroke="#a9aaa8" stroke-width="0.8"/><rect x="4.2" y="5.2" width="4" height="3.4" fill="#a9aaa8"/><path d="M5 5.2V4.2Q6.2 3 7.4 4.2V5.2" fill="none" stroke="#a9aaa8" stroke-width="0.7"/></svg>
<div style="left:859.6px;top:55.2px;width:3.4px;height:3.4px;background:#c4c5c3;border-radius:2px"></div>
<div style="left:861px;top:58.6px;width:0.7px;height:3.4px;background:#8d8e8c;"></div>
<div style="left:741px;top:68.5px;width:62.5px;height:9px;background:#444543;border-radius:1px"></div>
<span class="t" style="left:744px;top:69px;color:#dededc">正常</span>
<svg style="left:797.5px;top:71.6px" width="4.5" height="3.2" viewBox="0 0 4.5 3.2"><path d="M0.3 0.5L2.25 2.5L4.2 0.5" fill="none" stroke="#b3b4b2" stroke-width="0.7"/></svg>
<span class="t" style="left:807px;top:69px;color:#d0d0ce">不透明度:</span>
<div style="left:836px;top:68.5px;width:19.5px;height:9px;background:#444543;border-radius:1px"></div>
<span class="t" style="left:838px;top:69px;color:#e6e6e4">100%</span>
<div style="left:857px;top:68.5px;width:6.5px;height:9px;background:#4a4b49;border-radius:1px"></div>
<svg style="left:858px;top:71.6px" width="4.5" height="3.2" viewBox="0 0 4.5 3.2"><path d="M0.3 0.5L2.25 2.5L4.2 0.5" fill="none" stroke="#b3b4b2" stroke-width="0.7"/></svg>
<span class="t" style="left:742px;top:82.6px;color:#7c7d7b">锁定:</span>
<svg style="left:759px;top:82.4px" width="8" height="8" viewBox="0 0 8 8"><rect x="0.6" y="0.6" width="6.8" height="6.8" fill="none" stroke="#c9cac8" stroke-width="0.7"/><rect x="0.6" y="0.6" width="2.3" height="2.3" fill="#c9cac8"/><rect x="5.1" y="0.6" width="2.3" height="2.3" fill="#c9cac8"/><rect x="2.9" y="2.9" width="2.2" height="2.2" fill="#c9cac8"/><rect x="0.6" y="5.1" width="2.3" height="2.3" fill="#c9cac8"/><rect x="5.1" y="5.1" width="2.3" height="2.3" fill="#c9cac8"/></svg>
<svg style="left:770.5px;top:82px" width="7" height="9" viewBox="0 0 7 9"><path d="M6.4 0.4L2.6 5L3.4 5.8Z" fill="#c9cac8"/><path d="M2.2 5.4Q3.4 6.8 2 7.8Q1 8.6 0.2 8.4Q1 7.6 1 6.8Q1 5.4 2.2 5.4Z" fill="#c9cac8"/></svg>
<svg style="left:780px;top:82.4px" width="8" height="8" viewBox="0 0 8 8"><path d="M4 0L5.2 1.4H4.5V3.5H6.6V2.8L8 4L6.6 5.2V4.5H4.5V6.6H5.2L4 8L2.8 6.6H3.5V4.5H1.4V5.2L0 4L1.4 2.8V3.5H3.5V1.4H2.8Z" fill="#c9cac8"/></svg>
<svg style="left:790px;top:82.4px" width="8" height="8" viewBox="0 0 8 8"><path d="M0.6 1.6H4.6L6.8 3.8V7.2H0.6" fill="none" stroke="#c9cac8" stroke-width="0.8"/><path d="M0.6 0V8M4.4 1.6V4H6.8" fill="none" stroke="#c9cac8" stroke-width="0.6"/></svg>
<svg style="left:800px;top:82px" width="7" height="9" viewBox="0 0 7 9"><rect x="0.6" y="3.8" width="5.8" height="4.6" rx="0.5" fill="#c9cac8"/><path d="M1.8 3.8V2.4Q1.8 0.8 3.5 0.8Q5.2 0.8 5.2 2.4V3.8" fill="none" stroke="#c9cac8" stroke-width="0.9"/><rect x="3" y="5.2" width="1" height="1.8" fill="#535452"/></svg>
<span class="t" style="left:819px;top:82.6px;color:#d0d0ce">填充:</span>
<div style="left:836px;top:82.2px;width:19.5px;height:9px;background:#444543;border-radius:1px"></div>
<span class="t" style="left:838px;top:82.6px;color:#e6e6e4">100%</span>
<div style="left:857px;top:82.2px;width:6.5px;height:9px;background:#4a4b49;border-radius:1px"></div>
<svg style="left:858px;top:85.4px" width="4.5" height="3.2" viewBox="0 0 4.5 3.2"><path d="M0.3 0.5L2.25 2.5L4.2 0.5" fill="none" stroke="#b3b4b2" stroke-width="0.7"/></svg>
<div style="left:738.8px;top:94.5px;width:125.2px;height:0.7px;background:#414240;"></div>
<div style="left:738.8px;top:95.2px;width:125.2px;height:11.8px;background:#3c3d3b;"></div>
<svg style="left:741.6px;top:98.2px" width="8.4" height="5.6" viewBox="0 0 8.4 5.6"><path d="M0.3 2.8Q4.2 -1.6 8.1 2.8Q4.2 7.2 0.3 2.8Z" fill="#f0f0ee"/><circle cx="4.2" cy="2.8" r="1.5" fill="#3a3b39"/><circle cx="4.2" cy="2.8" r="0.6" fill="#f0f0ee"/></svg>
<svg style="left:754.4px;top:99.6px" width="3.8" height="2.8" viewBox="0 0 3.8 2.8"><path d="M0.3 0.4L1.9 2.2L3.5 0.4" fill="none" stroke="#8f908e" stroke-width="0.6"/></svg>
<span class="t" style="left:763.2px;top:96.8px;font-weight:bold;color:#e8e8e6;font-size:6px">画板 1</span>
<div style="left:753px;top:107px;width:111px;height:15.299999999999997px;background:#6b6c6a;"></div>
<div style="left:738.8px;top:121.89999999999999px;width:125.2px;height:0.6px;background:#484947;"></div>
<div style="left:752.6px;top:107px;width:0.6px;height:15.299999999999997px;background:#484947;"></div>
<svg style="left:741.6px;top:111.85000000000001px" width="8.4" height="5.6" viewBox="0 0 8.4 5.6"><path d="M0.3 2.8Q4.2 -1.6 8.1 2.8Q4.2 7.2 0.3 2.8Z" fill="#f0f0ee"/><circle cx="4.2" cy="2.8" r="1.5" fill="#3a3b39"/><circle cx="4.2" cy="2.8" r="0.6" fill="#f0f0ee"/></svg>
<svg style="left:760px;top:108px" width="16.6" height="13.4" viewBox="0 0 16.6 13.4"><path d="M0.4 3V0.4H3M13.6 0.4H16.2V3M16.2 10.4V13H13.6M3 13H0.4V10.4" fill="none" stroke="#e8e8e6" stroke-width="0.7"/></svg>
<div style="left:761.6px;top:109.2px;width:14.2px;height:11.2px;background:#ecece9;"></div>
<div style="left:770.4px;top:114.6px;width:6px;height:6.4px;background:#6b6c6a;"></div>
<svg style="left:771.2px;top:115.6px" width="4.8" height="4.6" viewBox="0 0 4.8 4.6"><rect x="0.4" y="0.4" width="4.8" height="3.8" fill="none" stroke="#d4d4d2" stroke-width="0.6"/><rect x="0" y="0" width="1.4" height="1.4" fill="#e4e4e2"/><rect x="4.2" y="0" width="1.4" height="1.4" fill="#e4e4e2"/><rect x="0" y="3.2" width="1.4" height="1.4" fill="#e4e4e2"/><rect x="4.2" y="3.2" width="1.4" height="1.4" fill="#e4e4e2"/></svg>
<span class="t" style="left:781.3px;top:111.45px;color:#e6e6e4;font-size:6px">椭圆 1 拷贝 4</span>
<div style="left:738.8px;top:137.4px;width:125.2px;height:0.6px;background:#484947;"></div>
<div style="left:752.6px;top:122.3px;width:0.6px;height:15.500000000000014px;background:#484947;"></div>
<svg style="left:741.6px;top:127.25000000000001px" width="8.4" height="5.6" viewBox="0 0 8.4 5.6"><path d="M0.3 2.8Q4.2 -1.6 8.1 2.8Q4.2 7.2 0.3 2.8Z" fill="#f0f0ee"/><circle cx="4.2" cy="2.8" r="1.5" fill="#3a3b39"/><circle cx="4.2" cy="2.8" r="0.6" fill="#f0f0ee"/></svg>
<div style="left:761.6px;top:124.5px;width:14.2px;height:11.2px;background:#ecece9;"></div>
<div style="left:770.4px;top:129.9px;width:6px;height:6.4px;background:#535452;"></div>
<svg style="left:771.2px;top:130.9px" width="4.8" height="4.6" viewBox="0 0 4.8 4.6"><rect x="0.4" y="0.4" width="4.8" height="3.8" fill="none" stroke="#d4d4d2" stroke-width="0.6"/><rect x="0" y="0" width="1.4" height="1.4" fill="#e4e4e2"/><rect x="4.2" y="0" width="1.4" height="1.4" fill="#e4e4e2"/><rect x="0" y="3.2" width="1.4" height="1.4" fill="#e4e4e2"/><rect x="4.2" y="3.2" width="1.4" height="1.4" fill="#e4e4e2"/></svg>
<span class="t" style="left:781.3px;top:126.85000000000001px;color:#d6d6d4;font-size:6px">椭圆 1 拷贝 3</span>
<div style="left:738.8px;top:152.9px;width:125.2px;height:0.6px;background:#484947;"></div>
<div style="left:752.6px;top:137.8px;width:0.6px;height:15.5px;background:#484947;"></div>
<svg style="left:741.6px;top:142.75px" width="8.4" height="5.6" viewBox="0 0 8.4 5.6"><path d="M0.3 2.8Q4.2 -1.6 8.1 2.8Q4.2 7.2 0.3 2.8Z" fill="#f0f0ee"/><circle cx="4.2" cy="2.8" r="1.5" fill="#3a3b39"/><circle cx="4.2" cy="2.8" r="0.6" fill="#f0f0ee"/></svg>
<div style="left:761.6px;top:140.0px;width:14.2px;height:11.2px;background:#ecece9;"></div>
<div style="left:770.4px;top:145.4px;width:6px;height:6.4px;background:#535452;"></div>
<svg style="left:771.2px;top:146.4px" width="4.8" height="4.6" viewBox="0 0 4.8 4.6"><rect x="0.4" y="0.4" width="4.8" height="3.8" fill="none" stroke="#d4d4d2" stroke-width="0.6"/><rect x="0" y="0" width="1.4" height="1.4" fill="#e4e4e2"/><rect x="4.2" y="0" width="1.4" height="1.4" fill="#e4e4e2"/><rect x="0" y="3.2" width="1.4" height="1.4" fill="#e4e4e2"/><rect x="4.2" y="3.2" width="1.4" height="1.4" fill="#e4e4e2"/></svg>
<span class="t" style="left:781.3px;top:142.35000000000002px;color:#d6d6d4;font-size:6px">椭圆 1 拷贝 2</span>
<div style="left:738.8px;top:168.6px;width:125.2px;height:0.6px;background:#484947;"></div>
<div style="left:752.6px;top:153.3px;width:0.6px;height:15.699999999999989px;background:#484947;"></div>
<svg style="left:741.6px;top:158.35px" width="8.4" height="5.6" viewBox="0 0 8.4 5.6"><path d="M0.3 2.8Q4.2 -1.6 8.1 2.8Q4.2 7.2 0.3 2.8Z" fill="#f0f0ee"/><circle cx="4.2" cy="2.8" r="1.5" fill="#3a3b39"/><circle cx="4.2" cy="2.8" r="0.6" fill="#f0f0ee"/></svg>
<div style="left:761.6px;top:155.5px;width:14.2px;height:11.2px;background:#ecece9;"></div>
<div style="left:770.4px;top:160.9px;width:6px;height:6.4px;background:#535452;"></div>
<svg style="left:771.2px;top:161.9px" width="4.8" height="4.6" viewBox="0 0 4.8 4.6"><rect x="0.4" y="0.4" width="4.8" height="3.8" fill="none" stroke="#d4d4d2" stroke-width="0.6"/><rect x="0" y="0" width="1.4" height="1.4" fill="#e4e4e2"/><rect x="4.2" y="0" width="1.4" height="1.4" fill="#e4e4e2"/><rect x="0" y="3.2" width="1.4" height="1.4" fill="#e4e4e2"/><rect x="4.2" y="3.2" width="1.4" height="1.4" fill="#e4e4e2"/></svg>
<span class="t" style="left:781.3px;top:157.95000000000002px;color:#d6d6d4;font-size:6px">椭圆 1 拷贝</span>
<div style="left:738.8px;top:184.29999999999998px;width:125.2px;height:0.6px;background:#484947;"></div>
<div style="left:752.6px;top:169px;width:0.6px;height:15.699999999999989px;background:#484947;"></div>
<svg style="left:741.6px;top:174.04999999999998px" width="8.4" height="5.6" viewBox="0 0 8.4 5.6"><path d="M0.3 2.8Q4.2 -1.6 8.1 2.8Q4.2 7.2 0.3 2.8Z" fill="#f0f0ee"/><circle cx="4.2" cy="2.8" r="1.5" fill="#3a3b39"/><circle cx="4.2" cy="2.8" r="0.6" fill="#f0f0ee"/></svg>
<div style="left:761.6px;top:171.2px;width:14.2px;height:11.2px;background:#ecece9;"></div>
<div style="left:770.4px;top:176.6px;width:6px;height:6.4px;background:#535452;"></div>
<svg style="left:771.2px;top:177.6px" width="4.8" height="4.6" viewBox="0 0 4.8 4.6"><rect x="0.4" y="0.4" width="4.8" height="3.8" fill="none" stroke="#d4d4d2" stroke-width="0.6"/><rect x="0" y="0" width="1.4" height="1.4" fill="#e4e4e2"/><rect x="4.2" y="0" width="1.4" height="1.4" fill="#e4e4e2"/><rect x="0" y="3.2" width="1.4" height="1.4" fill="#e4e4e2"/><rect x="4.2" y="3.2" width="1.4" height="1.4" fill="#e4e4e2"/></svg>
<span class="t" style="left:781.3px;top:173.65px;color:#d6d6d4;font-size:6px">椭圆 1</span>
<div style="left:738.8px;top:202.6px;width:125.2px;height:0.6px;background:#484947;"></div>
<div style="left:752.6px;top:184.7px;width:0.6px;height:18px;background:#484947;"></div>
<svg style="left:741.6px;top:191.2px" width="8.4" height="5.6" viewBox="0 0 8.4 5.6"><path d="M0.3 2.8Q4.2 -1.6 8.1 2.8Q4.2 7.2 0.3 2.8Z" fill="#f0f0ee"/><circle cx="4.2" cy="2.8" r="1.5" fill="#3a3b39"/><circle cx="4.2" cy="2.8" r="0.6" fill="#f0f0ee"/></svg>
<span class="t" style="left:765.8px;top:188px;font-family:'Liberation Serif',serif;font-size:10.5px;line-height:12px;height:12px;color:#e0e0de">T</span>
<span class="t" style="left:783.5px;top:190.4px;color:#d6d6d4;font-size:6px">水</span>
<svg style="left:749px;top:475.5px" width="8" height="4" viewBox="0 0 8 4"><ellipse cx="2.2" cy="2" rx="1.9" ry="1.5" fill="none" stroke="#a9aaa8" stroke-width="0.7"/><ellipse cx="5.8" cy="2" rx="1.9" ry="1.5" fill="none" stroke="#a9aaa8" stroke-width="0.7"/></svg>
<span class="t" style="left:766.5px;top:473.6px;font-family:'Liberation Serif',serif;font-style:italic;font-size:7px;color:#a9aaa8">fx</span>
<svg style="left:783px;top:474.5px" width="7" height="6" viewBox="0 0 7 6"><rect x="0" y="0" width="7" height="6" fill="#a9aaa8"/><circle cx="3.5" cy="3" r="1.7" fill="#535452"/></svg>
<svg style="left:800px;top:474.5px" width="6.4" height="6.4" viewBox="0 0 6.4 6.4"><circle cx="3.2" cy="3.2" r="2.8" fill="none" stroke="#a9aaa8" stroke-width="0.7"/><path d="M5.2 1.2A2.8 2.8 0 0 1 1.2 5.2Z" fill="#a9aaa8"/></svg>
<svg style="left:815.5px;top:474.5px" width="7.5" height="6" viewBox="0 0 7.5 6"><path d="M0 0.4H3L3.8 1.4H7.5V6H0Z" fill="#a9aaa8"/></svg>
<svg style="left:833px;top:474.5px" width="6.4" height="6.4" viewBox="0 0 6.4 6.4"><rect x="0.4" y="0.4" width="5.6" height="5.6" fill="none" stroke="#a9aaa8" stroke-width="0.7"/><path d="M3.2 1.8V4.6M1.8 3.2H4.6" stroke="#a9aaa8" stroke-width="0.7"/></svg>
<svg style="left:849.5px;top:474px" width="6.4" height="7" viewBox="0 0 6.4 7"><path d="M0.2 1.4H6.2M2.2 1.4V0.4H4.2V1.4M0.9 1.4V6.6H5.5V1.4M2.4 2.8V5.4M4 2.8V5.4" fill="none" stroke="#a9aaa8" stroke-width="0.7"/></svg>
<div style="left:35.3px;top:419.1px;width:226.6px;height:50.3px;background:linear-gradient(180deg,#f1f1f1 0%,#fbfbfb 40%,#f8f8f8 80%,#ededed 100%);border-radius:5px 6px 6px 6px;box-shadow:0 0.5px 1.2px rgba(0,0,0,0.6);transform:rotate(-0.44deg)"></div>
<div style="left:48px;top:433px;width:32px;height:22px;border-radius:50%;background:radial-gradient(ellipse at 38% 50%,rgba(110,110,110,0.42) 0%,rgba(150,150,150,0.2) 45%,rgba(255,255,255,0) 72%);transform:rotate(-18deg)"></div>
<svg style="left:0;top:0" width="870" height="489" viewBox="0 0 870 489"><defs>
<linearGradient id="pg1" x1="0" y1="0" x2="1" y2="0"><stop offset="0" stop-color="#4a9aec"/><stop offset="0.35" stop-color="#8cc6fb"/><stop offset="0.6" stop-color="#5aa6f0"/><stop offset="1" stop-color="#2f7fd6"/></linearGradient>
<linearGradient id="pg2" x1="0" y1="0" x2="0" y2="1"><stop offset="0" stop-color="#9dd2fd"/><stop offset="1" stop-color="#5eabf2"/></linearGradient>
<linearGradient id="pg3" x1="0" y1="0" x2="1" y2="1"><stop offset="0" stop-color="#7fc0fb"/><stop offset="1" stop-color="#3f8ee2"/></linearGradient>
</defs>
<path d="M49.6 443L52.6 450.6L53.8 450.2L51.4 442.6Z" fill="#4a4a4a"/>
<path d="M50.6 443L53 449.6" stroke="#c8c8c8" stroke-width="0.5"/>
<g transform="rotate(-19 46 434.5)">
<ellipse cx="46" cy="436.6" rx="16" ry="8.6" fill="#2f7cd2"/>
<ellipse cx="46" cy="434.2" rx="16" ry="8.4" fill="url(#pg3)"/>
<ellipse cx="46" cy="433.6" rx="13" ry="6.2" fill="#6fb6f6" opacity="0.6"/>
</g>
<g transform="rotate(-17 42 424)">
<path d="M33.6 418Q37.2 424.5 35.6 432.4Q42.6 436.6 50 432.4Q48 424.5 51.6 418Z" fill="url(#pg1)"/>
</g>
<g transform="rotate(-17 39.9 415.3)">
<ellipse cx="39.9" cy="417" rx="13.6" ry="6.6" fill="#3c8be0"/>
<ellipse cx="39.9" cy="415" rx="13.6" ry="6.4" fill="url(#pg2)"/>
<ellipse cx="39.9" cy="414.6" rx="11.6" ry="4.9" fill="#86c4fa"/>
</g></svg>
<span id="n1" style="left:106px;top:427.6px;font-family:'Liberation Sans','Noto Sans CJK SC',sans-serif;font-size:16.8px;line-height:19px;height:19px;color:#1b7de4;white-space:nowrap;letter-spacing:1.1px;font-weight:500;-webkit-text-stroke:0.25px #1b7de4">复制（<i style="font-style:normal;letter-spacing:1.65px;margin-left:-1.6px;-webkit-text-stroke:0.3px #1b7de4">Ctrl+J</i>）</span>
<span id="n2" style="left:106px;top:446px;font-family:'Liberation Sans','Noto Sans CJK SC',sans-serif;font-size:16.8px;line-height:19px;height:19px;color:#1b7de4;white-space:nowrap;letter-spacing:1.1px;font-weight:500;-webkit-text-stroke:0.25px #1b7de4">变形（<i style="font-style:normal;letter-spacing:1.65px;margin-left:-1.6px;-webkit-text-stroke:0.3px #1b7de4">Ctrl+T</i>）</span>
<span id="wm" style="left:698px;top:23.6px;font-family:'Liberation Sans','Noto Sans CJK SC',sans-serif;font-weight:700;font-size:17px;line-height:20px;height:20px;color:#ecece9;white-space:nowrap;text-shadow:0 0 1.5px rgba(0,0,0,0.55)">叫我呆呆北</span>
<div id="bili" style="left:0;top:0;width:870px;height:50px;font-family:'Liberation Sans',sans-serif;font-weight:700;color:#e4e4e2;text-shadow:0 0 1.2px rgba(0,0,0,0.6)">
<div style="left:791.6px;top:16.2px;width:15.2px;height:27.9px;transform:rotate(-6deg)"><span style="left:0;top:0;font-size:30px;line-height:30px;height:30px;transform-origin:0 0;transform:translate(-2.01px,-4.69px) scale(1.007,1.268);white-space:nowrap">b</span></div>
<div style="left:807px;top:25.5px;width:4px;height:16px;transform:rotate(-4deg)"><span style="left:0;top:0;font-size:30px;line-height:30px;height:30px;transform-origin:0 0;transform:translate(-2.05px,-2.73px) scale(0.975,0.737);white-space:nowrap">i</span></div>
<div style="left:812px;top:19.8px;width:4.7px;height:21.2px;transform:rotate(-3deg)"><span style="left:0;top:0;font-size:30px;line-height:30px;height:30px;transform-origin:0 0;transform:translate(-2.41px,-3.61px) scale(1.146,0.977);white-space:nowrap">l</span></div>
<div style="left:818px;top:25.5px;width:3.9px;height:16.5px;transform:rotate(-2deg)"><span style="left:0;top:0;font-size:30px;line-height:30px;height:30px;transform-origin:0 0;transform:translate(-2.00px,-2.81px) scale(0.951,0.760);white-space:nowrap">i</span></div>
<div style="left:824px;top:16.2px;width:14.4px;height:27.4px;transform:rotate(-5deg)"><span style="left:0;top:0;font-size:30px;line-height:30px;height:30px;transform-origin:0 0;transform:translate(-1.91px,-4.61px) scale(0.954,1.246);white-space:nowrap">b</span></div>
<div style="left:839.5px;top:25px;width:3.6px;height:16px;transform:rotate(-3deg)"><span style="left:0;top:0;font-size:30px;line-height:30px;height:30px;transform-origin:0 0;transform:translate(-1.84px,-2.73px) scale(0.878,0.737);white-space:nowrap">i</span></div>
<div style="left:844.3px;top:19.8px;width:4.5px;height:21.2px;transform:rotate(-2deg)"><span style="left:0;top:0;font-size:30px;line-height:30px;height:30px;transform-origin:0 0;transform:translate(-2.30px,-3.61px) scale(1.097,0.977);white-space:nowrap">l</span></div>
<div style="left:850.3px;top:25px;width:3.7px;height:17px;transform:rotate(-1deg)"><span style="left:0;top:0;font-size:30px;line-height:30px;height:30px;transform-origin:0 0;transform:translate(-1.89px,-2.90px) scale(0.902,0.783);white-space:nowrap">i</span></div>
</div>
</body></html>
